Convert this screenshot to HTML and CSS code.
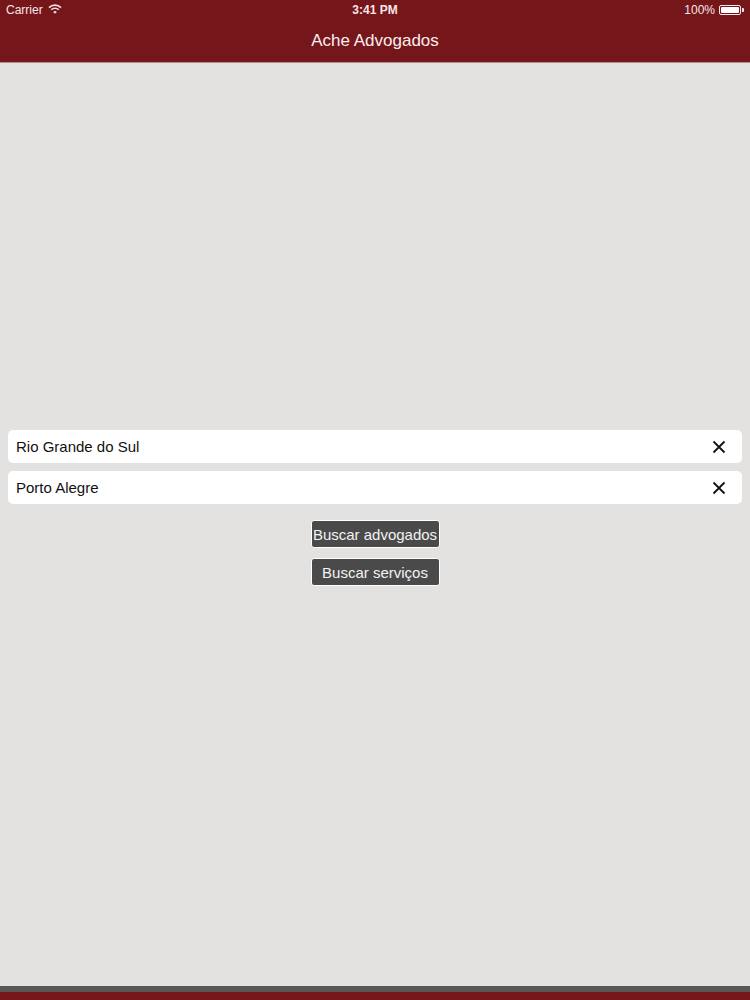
FILE: index.html
```html
<!DOCTYPE html>
<html>
<head>
<meta charset="utf-8">
<link rel="stylesheet" href="styles.css">
</head>
<body>
<div class="app">
  <header class="topbar">
    <div class="status">
      <div class="status-left">Carrier
        <svg class="wifi" width="14" height="10" viewBox="0 0 14 10">
          <path d="M1 3.6 A8.5 8.5 0 0 1 13 3.6" fill="none" stroke="#f4dede" stroke-width="1.6"/>
          <path d="M3.2 5.8 A5.4 5.4 0 0 1 10.8 5.8" fill="none" stroke="#f4dede" stroke-width="1.6"/>
          <path d="M5.2 7.9 A2.6 2.6 0 0 1 8.8 7.9 L7 9.8 Z" fill="#f4dede"/>
        </svg>
      </div>
      <div class="status-time">3:41 PM</div>
      <div class="status-right">100%
        <span class="battery"><span class="battery-fill"></span></span><span class="battery-tip"></span>
      </div>
    </div>
    <div class="navtitle">Ache Advogados</div>
  </header>
  <main class="content">
    <div class="field">
      <span class="field-text">Rio Grande do Sul</span>
      <svg class="clear" width="14" height="14" viewBox="0 0 14 14"><path d="M1.5 1.5 L12.5 12.5 M12.5 1.5 L1.5 12.5" stroke="#111" stroke-width="1.8"/></svg>
    </div>
    <div class="field">
      <span class="field-text">Porto Alegre</span>
      <svg class="clear" width="14" height="14" viewBox="0 0 14 14"><path d="M1.5 1.5 L12.5 12.5 M12.5 1.5 L1.5 12.5" stroke="#111" stroke-width="1.8"/></svg>
    </div>
    <div class="buttons">
      <button class="btn">Buscar advogados</button>
      <button class="btn">Buscar serviços</button>
    </div>
  </main>
  <footer class="bottombar"></footer>
</div>
</body>
</html>
```

FILE: styles.css
```css
* { box-sizing: border-box; }
html, body { margin: 0; padding: 0; }
body {
  width: 750px;
  height: 1000px;
  background: #e3e2e0;
  font-family: "Liberation Sans", Arial, sans-serif;
  overflow: hidden;
}
.app {
  display: flex;
  flex-direction: column;
  height: 1000px;
}
.topbar {
  background: #75161b;
  height: 63px;
  color: #f6e6e6;
  border-bottom: 1px solid #b98a8a;
}
.status {
  height: 20px;
  display: flex;
  align-items: center;
  justify-content: space-between;
  padding: 0 6px 0 6px;
  font-size: 12px;
  position: relative;
}
.status-left { display: flex; align-items: center; gap: 5px; }
.wifi { margin-top: -2px; }
.status-time {
  position: absolute;
  left: 0; right: 0;
  text-align: center;
  font-weight: bold;
  font-size: 12px;
  pointer-events: none;
}
.status-right { display: flex; align-items: center; gap: 0; }
.battery {
  margin-left: 4px;
  width: 22px;
  height: 10px;
  border: 1px solid #f6e6e6;
  border-radius: 2px;
  padding: 1px;
  display: inline-flex;
}
.battery-fill { flex: 1; background: #ffffff; border-radius: 1px; }
.battery-tip { width: 2px; height: 4px; background: #f6e6e6; margin-left: 1px; border-radius: 0 1px 1px 0; }
.navtitle {
  height: 42px;
  display: flex;
  align-items: center;
  justify-content: center;
  font-size: 17px;
  color: #fbeeee;
}
.content {
  flex: 1;
  display: flex;
  flex-direction: column;
  padding: 367px 8px 0 8px;
}
.field {
  height: 33px;
  background: #ffffff;
  border-radius: 5px;
  display: flex;
  align-items: center;
  justify-content: space-between;
  padding: 0 16px 0 8px;
  margin-bottom: 8px;
  font-size: 15px;
  color: #111;
}
.buttons {
  display: flex;
  flex-direction: column;
  align-items: center;
  gap: 10px;
  margin-top: 8px;
}
.btn {
  width: 129px;
  height: 28px;
  background: #4a4a4a;
  color: #f2f2f2;
  border: 1.5px solid #ffffff;
  border-radius: 3px;
  font-family: "Liberation Sans", Arial, sans-serif;
  font-size: 15px;
  padding: 0;
}
.bottombar {
  height: 14px;
  background: #75161b;
  border-top: 6px solid #5a5756;
}
```
